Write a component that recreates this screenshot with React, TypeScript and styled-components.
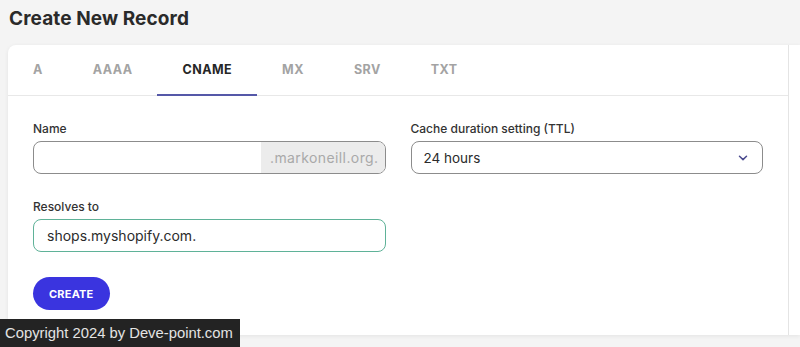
import React, { useState } from 'react';
import styled, { createGlobalStyle } from 'styled-components';

const RECORD_TYPES = ['A', 'AAAA', 'CNAME', 'MX', 'SRV', 'TXT'];

const GlobalStyle = createGlobalStyle`
  html, body {
    margin: 0;
    padding: 0;
    background: #f4f4f4;
    font-family: Inter, "Open Sans", sans-serif;
    color: #2b2b2b;
  }
  * { box-sizing: border-box; }
`;

const Page = styled.div`
  padding: 7px 0 0 8px;
  height: 347px;
  overflow: hidden;
`;

const Title = styled.h1`
  margin: 0 0 14px 1px;
  font-size: 19px;
  font-weight: 700;
  letter-spacing: 0.1px;
  line-height: 24px;
  color: #2a2a2a;
`;

const Card = styled.div`
  background: #fff;
  border-radius: 8px 0 0 0;
  box-shadow: 0 1px 4px rgba(0, 0, 0, 0.07);
  height: 290px;
`;

const Panel = styled.div`
  width: 781px;
  height: 100%;
  border-right: 1px solid #e4e4e4;
`;

const TabBar = styled.div`
  display: flex;
  height: 51px;
  border-bottom: 1px solid #e8e8e8;
`;

const Tab = styled.button<{ $active?: boolean }>`
  border: none;
  background: none;
  padding: 0 25px;
  margin: 0 0 -1px 0;
  font-family: inherit;
  font-size: 12.5px;
  font-weight: 700;
  letter-spacing: 0.45px;
  color: ${p => (p.$active ? '#262626' : '#a3a3a3')};
  border-bottom: 2px solid ${p => (p.$active ? '#5558a8' : 'transparent')};
  cursor: pointer;
`;

const Form = styled.div`
  padding: 25px 25px 0 25px;
  display: grid;
  grid-template-columns: minmax(0, 1fr) minmax(0, 1fr);
  column-gap: 25px;
  row-gap: 25px;
`;

const Field = styled.div`
  display: flex;
  flex-direction: column;
  min-width: 0;
`;

const Label = styled.label`
  font-size: 12px;
  font-weight: 500;
  color: #333;
  line-height: 16px;
  margin-bottom: 4px;
`;

const InputGroup = styled.div<{ $focused?: boolean }>`
  display: flex;
  height: 33px;
  border: 1px solid ${p => (p.$focused ? '#5fb298' : '#8c8c8c')};
  border-radius: 8px;
  overflow: hidden;
  background: #fff;
`;

const TextInput = styled.input`
  flex: 1;
  width: 0;
  min-width: 0;
  border: none;
  outline: none;
  padding: 0 13px;
  font-family: inherit;
  font-size: 14px;
  color: #2b2b2b;
  background: transparent;
`;

const Suffix = styled.span`
  display: flex;
  align-items: center;
  padding: 0 6px 0 9px;
  background: #ececec;
  color: #a9a9a9;
  font-size: 14px;
  letter-spacing: 0.4px;
  white-space: nowrap;
`;

const Select = styled.div`
  display: flex;
  align-items: center;
  justify-content: space-between;
  height: 33px;
  padding: 0 14px 0 12px;
  border: 1px solid #8c8c8c;
  border-radius: 8px;
  font-size: 13.5px;
  color: #2b2b2b;
`;

const Actions = styled.div`
  padding: 25px 25px 0 25px;
`;

const CreateButton = styled.button`
  height: 33px;
  padding: 0 16px;
  border: none;
  border-radius: 17px;
  background: #3a34df;
  color: #fff;
  font-family: inherit;
  font-size: 11px;
  font-weight: 700;
  letter-spacing: 0.2px;
  cursor: pointer;
`;

const Copyright = styled.div`
  position: fixed;
  left: 0;
  bottom: 0;
  width: 240px;
  height: 28px;
  padding-left: 5px;
  display: flex;
  align-items: center;
  white-space: nowrap;
  background: #232323;
  color: #e4e4e4;
  font-family: "Liberation Sans", Arial, sans-serif;
  font-size: 14.8px;
`;

const Chevron = () => (
  <svg width="10" height="6" viewBox="0 0 10 6" fill="none">
    <path d="M1.5 1.2 5 4.6 8.5 1.2" stroke="#4b4b8f" strokeWidth="1.5" strokeLinecap="round" strokeLinejoin="round" />
  </svg>
);

export default function App() {
  const [active, setActive] = useState('CNAME');
  return (
    <Page>
      <GlobalStyle />
      <Title>Create New Record</Title>
      <Card>
        <Panel>
          <TabBar>
            {RECORD_TYPES.map(t => (
              <Tab key={t} $active={t === active} onClick={() => setActive(t)}>{t}</Tab>
            ))}
          </TabBar>
          <Form>
            <Field>
              <Label>Name</Label>
              <InputGroup>
                <TextInput defaultValue="" />
                <Suffix>.markoneill.org.</Suffix>
              </InputGroup>
            </Field>
            <Field>
              <Label>Cache duration setting (TTL)</Label>
              <Select>
                <span>24 hours</span>
                <Chevron />
              </Select>
            </Field>
            <Field>
              <Label>Resolves to</Label>
              <InputGroup $focused>
                <TextInput defaultValue="shops.myshopify.com." />
              </InputGroup>
            </Field>
          </Form>
          <Actions>
            <CreateButton>CREATE</CreateButton>
          </Actions>
        </Panel>
      </Card>
      <Copyright>Copyright 2024 by Deve-point.com</Copyright>
    </Page>
  );
}
